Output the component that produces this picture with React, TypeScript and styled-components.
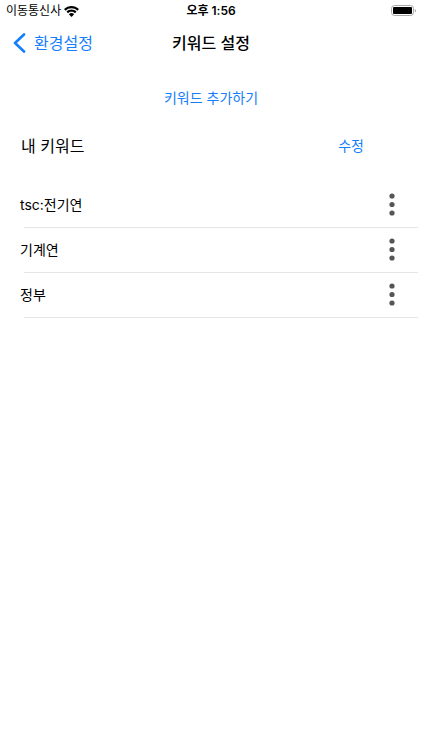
import React from "react";
import styled, { createGlobalStyle } from "styled-components";

const GlobalStyle = createGlobalStyle`
  *, *::before, *::after { box-sizing: border-box; }
  body {
    margin: 0;
    background: #fff;
    color: #000;
    font-family: Inter, "Noto Sans CJK KR", sans-serif;
  }
  button { font-family: inherit; }
`;

const Screen = styled.div`
  min-height: 100vh;
  display: flex;
  flex-direction: column;
`;

const Columns = styled.div`
  display: grid;
  grid-template-columns: 1fr auto 1fr;
  align-items: center;
`;

const StatusBar = styled(Columns)`
  height: 22px;
  padding: 0 6px;
  font-size: 12px;
  line-height: 22px;
`;

const Carrier = styled.div`
  display: flex;
  align-items: center;
  gap: 3px;
`;

const Clock = styled.time`
  font-weight: 600;
`;

const BatteryIcon = styled.svg`
  justify-self: end;
`;

const NavBar = styled(Columns)`
  height: 42px;
  padding: 0 13px;
`;

const BackLink = styled.a`
  display: flex;
  align-items: center;
  gap: 8px;
  color: #147efb;
  font-size: 16px;
  line-height: 24px;
  text-decoration: none;
`;

const Title = styled.h1`
  margin: 0;
  font-size: 16px;
  line-height: 24px;
  font-weight: 500;
`;

const TextButton = styled.button`
  padding: 0;
  border: 0;
  background: none;
  color: #147efb;
  font-size: 14px;
  line-height: 24px;
  cursor: pointer;
`;

const AddArea = styled.div`
  display: flex;
  justify-content: center;
  padding: 22px 0 24px;
`;

const SectionHeader = styled.div`
  display: flex;
  align-items: center;
  justify-content: space-between;
  height: 24px;
  padding: 0 58px 0 21px;
`;

const SectionTitle = styled.h2`
  margin: 0;
  font-size: 16px;
  line-height: 24px;
  font-weight: 400;
`;

const KeywordList = styled.ul`
  margin: 25px 0 0;
  padding: 0;
  list-style: none;
`;

const KeywordRow = styled.li`
  &::after {
    content: "";
    display: block;
    height: 1px;
    margin: 0 4px 0 24px;
    background: #e6e6e7;
  }
`;

const RowContent = styled.div`
  display: flex;
  align-items: center;
  justify-content: space-between;
  height: 44px;
  padding: 0 18px 0 20px;
  font-size: 14px;
  line-height: 24px;
`;

const MoreButton = styled.button`
  display: flex;
  padding: 8px;
  border: 0;
  background: none;
  color: #555;
  cursor: pointer;
`;

const keywords = ["tsc:전기연", "기계연", "정부"];

export default function App() {
  return (
    <>
      <GlobalStyle />
      <Screen>
        <StatusBar>
          <Carrier>
            <span>이동통신사</span>
            <svg width="15" height="11" viewBox="0 0 16 12" fill="#000" aria-hidden="true">
              <path d="M8 0C4.9 0 2.2 1.2.2 3.1c-.2.2-.2.4 0 .6l1.100 1.100c.2.2.4.2.6 0C3.500 3.300 5.600 2.400 8 2.400s4.500.9 6.100 2.400c.2.2.4.2.6 0l1.100-1.100c.2-.2.2-.4 0-.6C13.800 1.200 11.100 0 8 0Z" />
              <path d="M8 3.800c-2 0-3.800.8-5.200 2-.2.2-.2.4 0 .6l1.100 1.100c.2.2.4.2.6 0C5.400 6.700 6.600 6.200 8 6.200s2.600.5 3.500 1.300c.2.2.4.2.6 0l1.100-1.100c.2-.2.2-.4 0-.6C11.800 4.600 10 3.800 8 3.800Z" />
              <path d="M8 7.600c-1 0-1.900.4-2.600 1-.2.1-.2.4 0 .6l2.300 2.400c.2.2.4.2.6 0l2.300-2.400c.2-.2.2-.5 0-.6-.7-.6-1.600-1-2.600-1Z" />
            </svg>
          </Carrier>
          <Clock>오후 1:56</Clock>
          <BatteryIcon width="25" height="12" viewBox="0 0 25 12" role="img" aria-label="배터리">
            <rect x=".5" y=".5" width="22" height="10" rx="3" fill="#fff" stroke="#a8a8a8" />
            <rect x="2" y="2" width="19" height="7" rx="1" fill="#000" />
            <path d="M23.800 4v3.500c.8-.3 1.200-1 1.200-1.750S24.600 4.300 23.800 4Z" fill="#a8a8a8" />
          </BatteryIcon>
        </StatusBar>
        <NavBar as="header">
          <BackLink href="#settings">
            <svg width="13" height="20" viewBox="0 0 13 20" fill="none" aria-hidden="true">
              <path d="M11 1.500 2 10l9 8.500" stroke="currentColor" strokeWidth="2.600" strokeLinecap="round" strokeLinejoin="round" />
            </svg>
            <span>환경설정</span>
          </BackLink>
          <Title>키워드 설정</Title>
        </NavBar>
        <main>
          <AddArea>
            <TextButton type="button">키워드 추가하기</TextButton>
          </AddArea>
          <SectionHeader>
            <SectionTitle>내 키워드</SectionTitle>
            <TextButton type="button">수정</TextButton>
          </SectionHeader>
          <KeywordList>
            {keywords.map((keyword) => (
              <KeywordRow key={keyword}>
                <RowContent>
                  <span>{keyword}</span>
                  <MoreButton type="button" aria-label={`${keyword} 더보기`}>
                    <svg width="8" height="24" viewBox="0 0 8 24" fill="currentColor" aria-hidden="true">
                      <circle cx="4" cy="3" r="2.600" />
                      <circle cx="4" cy="11.500" r="2.600" />
                      <circle cx="4" cy="20" r="2.600" />
                    </svg>
                  </MoreButton>
                </RowContent>
              </KeywordRow>
            ))}
          </KeywordList>
        </main>
      </Screen>
    </>
  );
}
